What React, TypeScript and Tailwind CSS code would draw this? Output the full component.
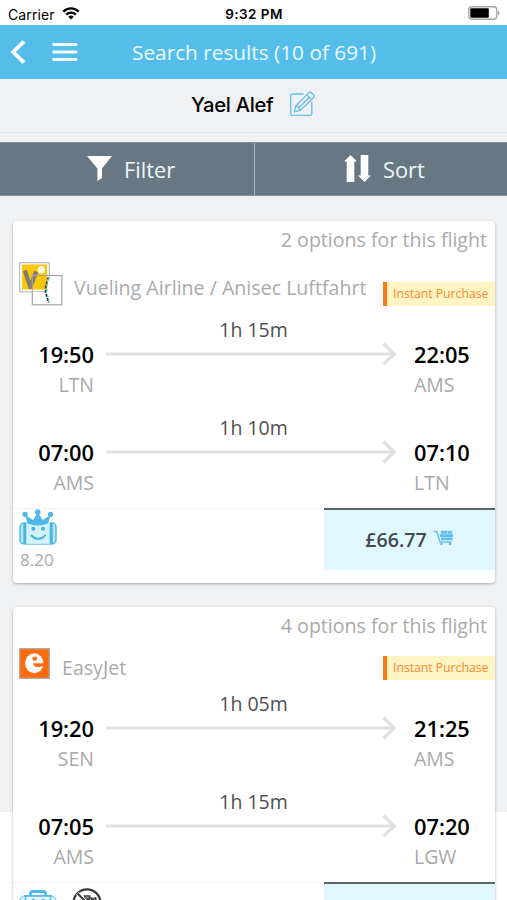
import clsx from 'clsx';

type Leg = { duration: string; depart: string; from: string; arrive: string; to: string };

const vuelingLegs: Leg[] = [
  { duration: '1h 15m', depart: '19:50', from: 'LTN', arrive: '22:05', to: 'AMS' },
  { duration: '1h 10m', depart: '07:00', from: 'AMS', arrive: '07:10', to: 'LTN' },
];

const easyJetLegs: Leg[] = [
  { duration: '1h 05m', depart: '19:20', from: 'SEN', arrive: '21:25', to: 'AMS' },
  { duration: '1h 15m', depart: '07:05', from: 'AMS', arrive: '07:20', to: 'LGW' },
];

function StatusBar() {
  return (
    <div className="flex h-[25px] items-center justify-between bg-white pt-[3px] pr-[7px] pl-2 font-['Inter',sans-serif] text-black">
      <div className="flex flex-1 items-center gap-[7px]">
        <span className="text-[14px] tracking-[0.1px]">Carrier</span>
        <svg width="18" height="13" viewBox="0 0 18 13" className="-mt-[2px]">
          <path d="M9 12.6 6.3 9.8a3.9 3.9 0 0 1 5.4 0z" fill="#000" />
          <path d="M4.2 7.6a6.8 6.8 0 0 1 9.6 0M1.3 4.6a10.9 10.9 0 0 1 15.4 0" fill="none" stroke="#000" strokeWidth="2.4" />
        </svg>
      </div>
      <span className="text-[13.5px] font-semibold tracking-[0.45px]">9:32 PM</span>
      <div className="flex flex-1 justify-end">
        <svg width="32" height="14" viewBox="0 0 32 14" className="-mt-[2px]">
          <rect x="0.8" y="0.8" width="28" height="12.4" rx="3.4" fill="#fff" stroke="#a6a6a6" strokeWidth="1.4" />
          <rect x="2.3" y="2.3" width="18.5" height="9.4" rx="1" fill="#000" />
          <path d="M30.2 4.8c1.7.7 1.7 3.7 0 4.4z" fill="#8a8a8a" />
        </svg>
      </div>
    </div>
  );
}

function NavBar() {
  return (
    <div className="flex h-[54px] items-center bg-[#55bdea] pl-[10px]">
      <svg width="16" height="24" viewBox="0 0 16 24" fill="none" stroke="#fff" strokeWidth="3.8">
        <path d="M14 1.5 3.2 12 14 22.5" />
      </svg>
      <svg width="26" height="20" viewBox="0 0 26 20" stroke="#f3fcff" strokeWidth="2.8" strokeLinecap="round" className="ml-[26px]">
        <path d="M1.6 2.5h22.6M1.6 10h22.6M1.6 17.5h22.6" />
      </svg>
      <h1 className="ml-[54px] pt-[2px] text-[20.8px] whitespace-nowrap text-[#eafaff]">Search results (10 of 691)</h1>
    </div>
  );
}

function TravellerRow() {
  return (
    <div className="flex h-[54px] items-center border-b border-[#e5e8ea] pl-[191px]">
      <span className="font-['Inter',sans-serif] text-[20.2px] font-medium tracking-[-0.3px] text-black">Yael Alef</span>
      <svg width="27" height="26" viewBox="0 0 27 26" fill="none" stroke="#64bfea" strokeWidth="1.3" strokeLinejoin="round" className="ml-4 -mt-1">
        <path d="M14.5 3H3.2a1.5 1.5 0 0 0-1.5 1.5v18.3a1.5 1.5 0 0 0 1.5 1.5h18.1a1.5 1.5 0 0 0 1.5-1.5V11" />
        <path d="m5.4 20.8 1.5-6L19.6 1.9a2.2 2.2 0 0 1 3 0l1.9 1.8a2.2 2.2 0 0 1 0 3L11.4 19.4zM6.9 14.8l2.2.5.4 2 1.9 2.1M17.8 3.8l4.8 4.8M9.5 17.3 20.3 6.2" />
      </svg>
    </div>
  );
}

function Toolbar() {
  return (
    <div className="mt-[9px] flex h-[54px] border-y border-[#84919b] bg-[#687784] text-[21.8px] text-[#edf7fb]">
      <button className="flex w-[255px] items-center border-r border-[#aeb6bc] pl-[87px]">
        <svg width="25" height="26" viewBox="0 0 25 26" fill="#fff" className="-mt-[2px]">
          <path d="M0 1h25L15 13.5V23l-4.6 3V13.5z" />
        </svg>
        <span className="ml-3 pt-[2px]">Filter</span>
      </button>
      <button className="flex flex-1 items-center pl-[89px]">
        <svg width="27" height="28" viewBox="0 0 27 28" fill="#fff">
          <path d="M6.5 0 13 6.5h-2.7V27H2.7V6.5H0zM20.5 27 27 20.5h-2.7V0h-7.6v20.5H14z" />
        </svg>
        <span className="ml-3 pt-[2px]">Sort</span>
      </button>
    </div>
  );
}

function VuelingLogo() {
  return (
    <svg width="44" height="44" viewBox="0 0 44 44">
      <rect x="0.7" y="0.7" width="29.6" height="29.2" fill="#fff" stroke="#b9b9b9" strokeWidth="1.2" />
      <rect x="3" y="2.5" width="25" height="25" fill="#fbc60b" />
      <path d="M5.8 8.5 11.3 25 17.2 9.5" fill="none" stroke="#7f7d6c" strokeWidth="4.2" strokeLinejoin="round" />
      <circle cx="22.3" cy="7.8" r="3.7" fill="#fff8dc" />
      {/* the second tile is see-through on its left half */}
      <path d="M28.5 14h14v28.5H13.5V30h13.5z" fill="#fff" />
      <rect x="13.3" y="13.5" width="29.6" height="29.3" fill="none" stroke="#a4a4a0" strokeWidth="1.2" />
      <path d="m29.3 15.5-2.5 8.5-.2 6 2.9 10.5" fill="none" stroke="#233c39" strokeWidth="1.8" strokeDasharray="3 1.2" />
      <path d="m30.3 15-2.5 9v6l2.5 10.5" fill="none" stroke="#45c3a4" strokeWidth="1.2" strokeDasharray="3 3" />
      <path d="m28.6 17-2.8 7.2v6" fill="none" stroke="#df9b52" strokeWidth="1" strokeDasharray="1.5 3" />
    </svg>
  );
}

function EasyJetLogo() {
  return (
    <svg width="31" height="31" viewBox="0 0 31 31">
      <rect x="0.7" y="0.7" width="29.6" height="29.6" fill="#ff6a0c" stroke="#b5a79d" strokeWidth="1.3" />
      <ellipse cx="15.3" cy="15.2" rx="9.2" ry="10" fill="#fff" />
      <ellipse cx="15.8" cy="10.7" rx="2.4" ry="2.1" fill="#ff6a0c" />
      <path d="M26 15.2H14.2c.2 3.6 4.2 5.2 9.4 2.9l2.4-.6z" fill="#ff6a0c" />
    </svg>
  );
}

function RobotIcon() {
  return (
    <svg width="38" height="37" viewBox="0 0 38 37">
      <rect x="1" y="14" width="36" height="21" rx="4" fill="#b9e6f6" stroke="#56bbe8" strokeWidth="1.5" />
      <rect x="7" y="13.5" width="24" height="22" fill="#d3f1f8" />
      <path d="M5.8 14v21M32.2 14v21" stroke="#49b5e5" strokeWidth="3" />
      <path d="M7 35.3h24" stroke="#83cfed" />
      <path d="M8.7 14.5 6 6l8.2 5 4.6-8 4.6 8 8.2-5-2.7 8.5c-6.8 2.6-13.4 2.6-20.2 0z" fill="#4bb8e8" />
      <circle cx="6" cy="5.3" r="2.6" fill="#4bb8e8" />
      <circle cx="18.8" cy="2.9" r="2.7" fill="#4bb8e8" />
      <circle cx="31.5" cy="5.3" r="2.6" fill="#4bb8e8" />
      <circle cx="14.3" cy="19.7" r="2" fill="#44b2e3" />
      <circle cx="24" cy="19.7" r="2" fill="#44b2e3" />
      <path d="M12.5 26.5c3.6 4.4 10.2 4.4 13.5 0" fill="none" stroke="#44b2e3" strokeWidth="2" strokeLinecap="round" />
    </svg>
  );
}

function SuitcaseIcon() {
  return (
    <svg width="38" height="30" viewBox="0 0 38 30">
      <rect x="1" y="7" width="36" height="22" rx="5" fill="#e5f7fc" stroke="#83d1f1" strokeWidth="1.5" />
      <path d="M6.5 7v22M31.5 7v22" stroke="#62c4ee" strokeWidth="1.7" />
      <path d="M11.5 7V4.6c0-1.3 1-2.1 2.2-2.1h10.6c1.2 0 2.2.8 2.2 2.1V7" fill="none" stroke="#4dbaec" strokeWidth="2.8" />
      <path d="M5 6.8h28" stroke="#4dbaec" strokeWidth="1.5" />
      <circle cx="14.3" cy="11.8" r="2" fill="#48b6e7" />
      <circle cx="24.3" cy="11.8" r="2" fill="#48b6e7" />
    </svg>
  );
}

function NoBaggageIcon() {
  return (
    <svg width="30" height="30" viewBox="0 0 30 30" fill="none" stroke="#3a3a3a" className="-mt-[1px]">
      <circle cx="15" cy="15" r="13.6" strokeWidth="2.2" />
      <rect x="9" y="10" width="13" height="12" rx="1.5" fill="#555" strokeWidth="1" />
      <path d="M12.7 10V8h5v2" strokeWidth="1.6" />
      <path d="M12.5 11v10M18.5 11v10" stroke="#aaa" />
      <path d="M23.5 9v3" strokeWidth="2" />
      <path d="m5.3 5.3 19.4 19.4" stroke="#fff" strokeWidth="4" />
      <path d="m5.3 5.3 19.4 19.4" strokeWidth="2" />
    </svg>
  );
}

function CartIcon() {
  return (
    <svg width="21" height="16" viewBox="0 0 21 16" fill="none" stroke="#62bdec" className="-mt-[4px]">
      <path d="M.5 1.5h3.2L7 11.9h11.5" strokeWidth="1.5" />
      <path d="M7.8 .8H14v3H7.8zM14.5 .8h4.7v3h-4.7zM6.6 4.2h13.4v2.9H7.2zM7.6 7.5h12v2.8H8.2z" fill="#62bdec" stroke="none" />
      <circle cx="8.4" cy="14" r="1.3" fill="#62bdec" stroke="none" />
      <circle cx="17" cy="14" r="1.3" fill="#62bdec" stroke="none" />
    </svg>
  );
}

function LegRow({ leg }: { leg: Leg }) {
  return (
    <div className="flex h-[98px]">
      <div className="w-[81px] pt-[28px] text-right">
        <div className="text-[21.8px] leading-[30px] font-semibold text-black">{leg.depart}</div>
        <div className="text-[19.5px] leading-[30px] text-[#a9a9a9]">{leg.from}</div>
      </div>
      <div className="ml-3 w-[291px] pt-[3px]">
        <div className="pl-[4px] text-center text-[19.5px] leading-[30px] text-[#4f4f4f]">{leg.duration}</div>
        <svg width="291" height="26" viewBox="0 0 291 26" fill="none" stroke="#dfe2e2" strokeWidth="3" className="-mt-[4px]">
          <path d="M0 13h288" />
          <path d="m277.5 2.5 10.5 10.5-10.5 10.5" strokeWidth="3.4" />
        </svg>
      </div>
      <div className="ml-[17px] pt-[28px]">
        <div className="text-[21.8px] leading-[30px] font-semibold text-black">{leg.arrive}</div>
        <div className="text-[19.5px] leading-[30px] text-[#a9a9a9]">{leg.to}</div>
      </div>
    </div>
  );
}

type FlightCardProps = {
  options: number;
  airline: string;
  logo: React.ReactNode;
  compact?: boolean;
  legs: Leg[];
  footer: React.ReactNode;
  price?: string;
};

function FlightCard({ options, airline, logo, compact, legs, footer, price }: FlightCardProps) {
  return (
    <section className="mr-3 ml-[13px] h-[362px] rounded-[4px] bg-white shadow-[0_1px_3px_rgba(0,0,0,0.3)]">
      <p className="h-[41px] pr-[8px] text-right text-[19.6px] leading-[37px] text-[#aaa]">{options} options for this flight</p>
      <div className={clsx('flex pl-[6px]', compact ? 'h-[32px]' : 'h-[44px]')}>
        {logo}
        <span className={clsx('ml-[11px] self-end text-[19.6px] whitespace-nowrap text-[#aaa]', compact ? 'pl-[1px] leading-[25px]' : 'leading-[37px]')}>{airline}</span>
        <span className="ml-auto h-[24px] w-[112px] self-end border-l-4 border-[#ff7a12] bg-[#fff5c4] pl-[6px] text-[12.2px] leading-[24px] whitespace-nowrap text-[#fb882e]">
          Instant Purchase
        </span>
      </div>
      <div className="pt-[6px]">
        {legs.map((leg) => (
          <LegRow key={leg.depart} leg={leg} />
        ))}
      </div>
      <div className="flex">
        <div className="flex-1 border-t border-[#eff2f3] pl-[6px]">{footer}</div>
        <div className="flex h-[62px] w-[171px] items-center justify-center gap-[6px] border-t-2 border-[#59666a] bg-[#e1f7fe] text-[#424a4e]">
          {price && (
            <>
              <span className="text-[19.6px] font-semibold">{price}</span>
              <CartIcon />
            </>
          )}
        </div>
      </div>
    </section>
  );
}

function App() {
  return (
    <div className="h-[900px] w-[507px] overflow-hidden bg-[linear-gradient(#f0f1f3_812px,#fff_812px)] font-['Open_Sans',sans-serif]">
      <StatusBar />
      <NavBar />
      <TravellerRow />
      <Toolbar />
      <main className="flex flex-col gap-6 pt-[25px]">
        <FlightCard
          options={2}
          airline="Vueling Airline / Anisec Luftfahrt"
          logo={<VuelingLogo />}
          legs={vuelingLegs}
          price="£66.77"
          footer={
            <>
              <RobotIcon />
              <div className="pl-[1px] text-[17px] leading-[27px] text-[#aaa]">8.20</div>
            </>
          }
        />
        <FlightCard
          options={4}
          airline="EasyJet"
          logo={<EasyJetLogo />}
          compact
          legs={easyJetLegs}
          footer={
            <div className="flex gap-[15px] pt-[6px]">
              <SuitcaseIcon />
              <NoBaggageIcon />
            </div>
          }
        />
      </main>
    </div>
  );
}

export default App;
